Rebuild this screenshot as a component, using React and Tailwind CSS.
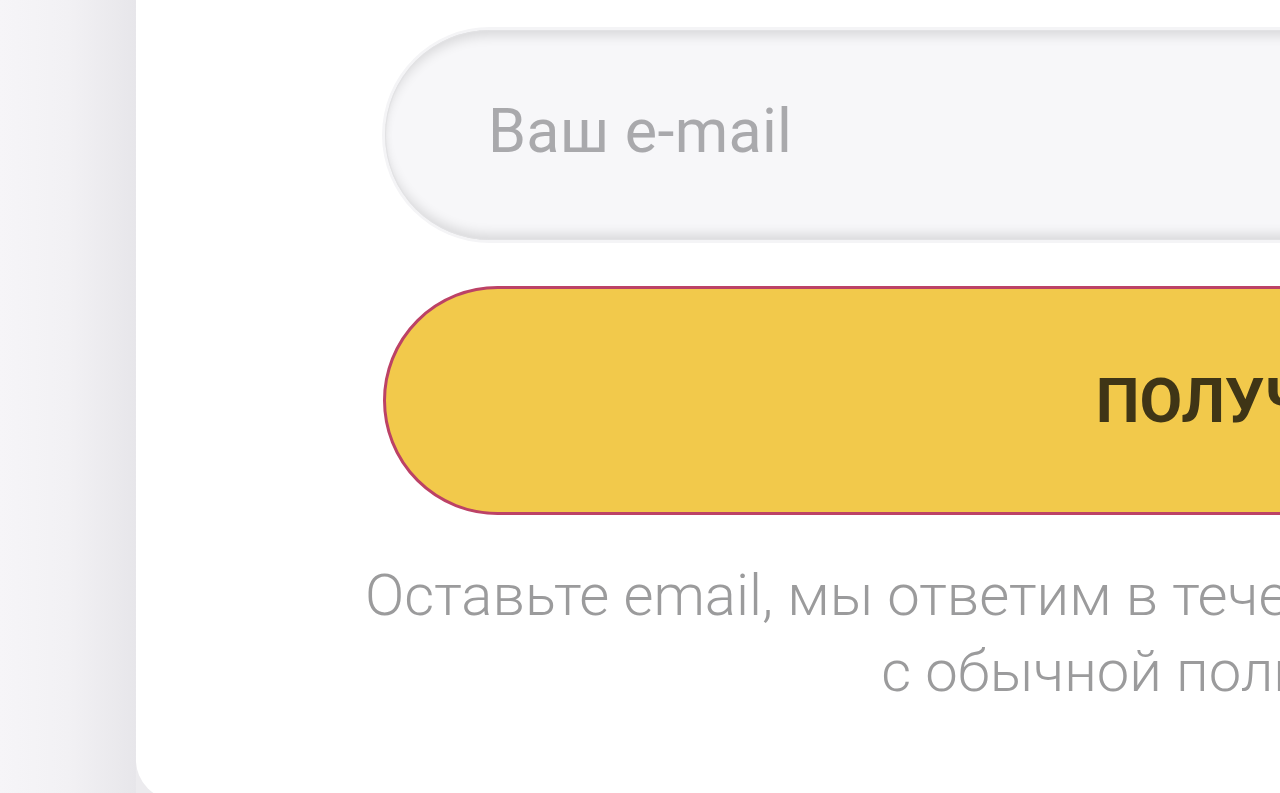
import React from "react";

// Subscription form card, zoomed-in fragment
export default function App() {
  return (
    <div className="flex h-[793px] w-[1280px] overflow-hidden bg-[#ecebee] font-['Roboto',sans-serif]">
      {/* left gutter with the card's soft shadow */}
      <div className="w-[136px] shrink-0 bg-linear-to-r from-[#f6f5f8] via-[#f2f1f4] to-[#e7e6ea]" />

      {/* card */}
      <div className="flex h-[800px] w-[2251px] shrink-0 flex-col rounded-bl-[40px] bg-white px-[249px] pt-[30px]">
        <input
          type="email"
          placeholder="Ваш e-mail"
          className="h-[210px] w-full shrink-0 rounded-full bg-[#f7f7f9] pb-[8px] pl-[103px] text-[61px] tracking-[0.3px] text-[#444] outline-none shadow-[0_0_0_3px_#f4f4f6,inset_0_0_0_1px_#e2e2e4,inset_0_10px_12px_-4px_rgba(0,0,0,0.12),inset_0_-10px_12px_-4px_rgba(0,0,0,0.12)] placeholder:text-[#a9a9ac]"
        />

        <button className="-mx-[2px] mt-[46px] flex h-[229px] shrink-0 items-center justify-center rounded-full border-[3px] border-[#bc4266] bg-[#f2c94b] text-[62px] font-bold uppercase text-[#3f3516]">
          Получить
        </button>

        <p className="-mx-[140px] mt-[42px] text-center text-[58px] font-light leading-[76px] text-[#9b9b9c]">
          <span className="block whitespace-nowrap">
            Оставьте email, мы ответим в течение одного рабочего дня вместе
          </span>
          <span className="block whitespace-nowrap pr-[15px]">с обычной политикой сайта</span>
        </p>
      </div>
    </div>
  );
}
